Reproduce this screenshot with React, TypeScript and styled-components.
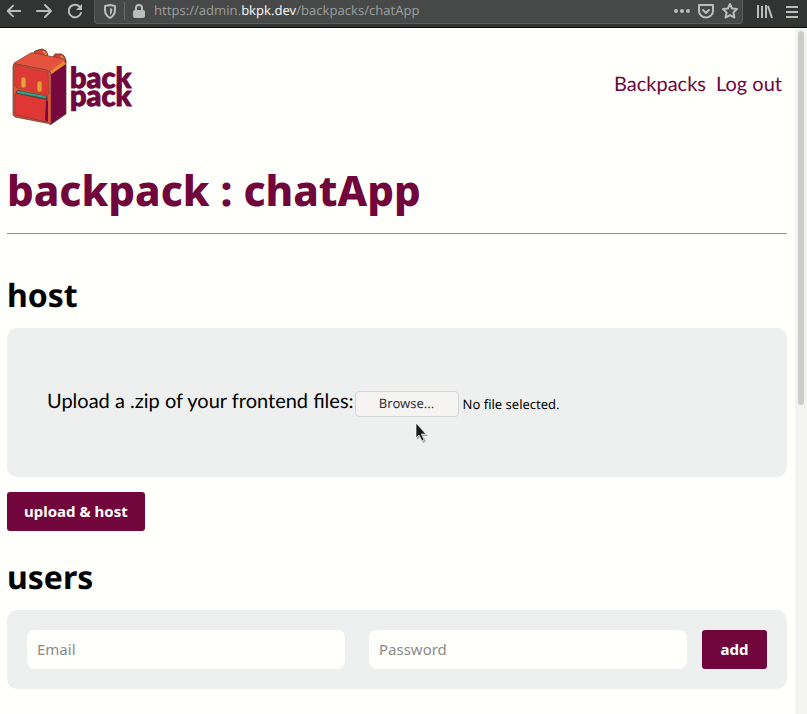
import React, { useState } from "react";
import styled, { createGlobalStyle } from "styled-components";

const plum = "#70063c";
const paper = "#fffffc";
const ui = `"Noto Sans", "Open Sans", sans-serif`;

const GlobalStyle = createGlobalStyle`
  * { box-sizing: border-box; }
  html, body, #root { height: 100%; }
  body { margin: 0; background: ${paper}; color: #000; font-family: ${ui}; overflow: hidden; text-rendering: geometricPrecision; }
  button, input { font-family: inherit; }
`;

const Browser = styled.div`
  display: flex;
  flex-direction: column;
  height: 100vh;
`;

const Toolbar = styled.div`
  display: flex;
  flex: none;
  height: 28px;
  padding: 0 2px 3px 5px;
  background: #323434;
  border-bottom: 1px solid #0c0c0c;
  color: #bcbdbb;
`;

const IconButton = styled.button<{ $width?: number }>`
  display: flex;
  align-items: center;
  justify-content: center;
  width: ${(p) => p.$width ?? 30}px;
  height: 22px;
  padding: 0;
  border: 0;
  background: none;
  color: inherit;
  flex: none;
`;

const AddressBar = styled.div`
  display: flex;
  flex: 1;
  min-width: 0;
  margin: 0 7px 0 9px;
  background: #474949;
  border: 1px solid #5b5d5d;
  border-top: 0;
  border-radius: 0 0 4px 4px;
`;

const Divider = styled.span`
  width: 1px;
  height: 18px;
  margin: 2px 0;
  background: #686a6a;
`;

const Address = styled.div`
  flex: 1;
  min-width: 0;
  overflow: hidden;
  padding-left: 1px;
  color: #999b9a;
  font-size: 13px;
  line-height: 21px;
  white-space: nowrap;
  strong { color: #f4f4f4; font-weight: 400; }
`;

const Viewport = styled.div`
  display: grid;
  grid-template-columns: minmax(0, 1fr) 12px;
  flex: 1;
  min-height: 0;
`;

const Page = styled.div`
  padding: 0 8px 0 7px;
  overflow: hidden;
`;

const ScrollTrack = styled.div`
  padding: 3px;
  background: #f3f4f1;
`;

const ScrollThumb = styled.div`
  height: 55%;
  border-radius: 3px;
  background: #cbcccb;
`;

const Header = styled.header`
  display: flex;
  align-items: center;
  justify-content: space-between;
  height: 112px;
  padding: 6px 5px 0 4px;
`;

const Nav = styled.nav`
  display: flex;
  gap: 10px;
  padding-bottom: 6px;
`;

const NavLink = styled.a`
  color: ${plum};
  font: 20px/24px Lato, sans-serif;
  text-decoration: none;
`;

const Title = styled.h1`
  margin: 0;
  padding: 19px 0 11px;
  border-bottom: 1px solid #8b8c8f;
  color: ${plum};
  font-size: 42px;
  font-weight: 800;
  line-height: 63px;
  white-space: nowrap;
`;

const Section = styled.section<{ $first?: boolean }>`
  padding-top: ${(p) => (p.$first ? 38 : 23)}px;
`;

const SectionTitle = styled.h2`
  margin: 0 0 8px;
  font-size: 32px;
  font-weight: 700;
  line-height: 48px;
`;

const Panel = styled.div<{ $roomy?: boolean }>`
  padding: ${(p) => (p.$roomy ? "60px 40px" : "20px")};
  border-radius: 10px;
  background: #eef0f0;
`;

const FileField = styled.div`
  position: relative;
  display: flex;
  align-items: center;
  min-height: 29px;
`;

const FieldLabel = styled.label`
  padding-bottom: 4px;
  font: 20px/24px Lato, sans-serif;
`;

const HiddenInput = styled.input`
  position: absolute;
  width: 1px;
  height: 1px;
  opacity: 0;
`;

const Browse = styled.label`
  width: 104px;
  height: 26px;
  margin: 3px 4px 0 1px;
  border: 1px solid #d5d7d6;
  border-radius: 4px;
  background: #f5f4f2;
  color: #303334;
  font-size: 13px;
  line-height: 23px;
  text-align: center;
`;

const FileName = styled.span`
  margin-top: 2px;
  font-size: 13px;
  line-height: 20px;
`;

const Pointer = styled.svg`
  position: absolute;
  left: 367px;
  top: 34px;
  pointer-events: none;
`;

const Button = styled.button<{ $spaced?: boolean }>`
  height: 39px;
  margin-top: ${(p) => (p.$spaced ? 15 : 0)}px;
  padding: 0 17px 2px;
  border: 0;
  border-radius: 3px;
  background: ${plum};
  color: ${paper};
  font-size: 15px;
  font-weight: 700;
`;

const UserForm = styled.form`
  display: grid;
  grid-template-columns: 1fr 65px;
  column-gap: 15px;
`;

const Credentials = styled.div`
  display: grid;
  grid-template-columns: 1fr 1fr;
  column-gap: 24px;
`;

const TextInput = styled.input`
  min-width: 0;
  width: 100%;
  height: 39px;
  padding: 0 10px 2px;
  border: 0;
  border-radius: 8px;
  background: ${paper};
  font-size: 15px;
  &::placeholder { color: #8b8b8a; opacity: 1; }
`;

const Stroke = ({ children, width = 2 }: { children: React.ReactNode; width?: number }) => (
  <svg width="20" height="20" viewBox="0 0 20 20" fill="none" stroke="currentColor"
    strokeWidth={width} strokeLinecap="round" strokeLinejoin="round" aria-hidden="true">
    {children}
  </svg>
);

const Logo = () => (
  <svg width="128" height="80" viewBox="0 0 128 80" role="img" aria-label="back pack">
    <path d="M22 7 24 4 31 2Q36 3 37 8L34 11M42 10 44 7 50 7Q54 8 55 14" fill="#dc3f32" stroke="#6b4038" />
    <path d="M32 4 35 7 34 10M50 9 53 13" fill="none" stroke="#e98b33" strokeWidth="2" />
    <path d="M3 16 18 7Q20 5 23 6L53 12 55 15 40 25 5 20Z" fill="#e5533e" stroke="#764239" strokeWidth=".7" />
    <path d="M39 24 55 14V67L39 78Z" fill="#76083f" stroke="#4e3138" strokeWidth=".7" />
    <path d="M39 24 53 14 55 17 39 28Z" fill="#ee8832" />
    <path d="M2 19Q2 16 5 17L36 23Q40 24 40 28V77L4 70 2 68Z" fill="#e55237" stroke="#654139" strokeWidth=".8" />
    <path d="M4 18 37 25 38 45Q38 50 34 48L6 41Q4 40 3 37Z" fill="#df3935" stroke="#a74332" strokeWidth=".8" />
    <path d="M7 46 36 52V75L4 68V48Q4 45 7 46Z" fill="#df3834" stroke="#793b38" strokeWidth=".8" />
    <path d="M35 53 37 54V75L34 73Z" fill="#76083f" />
    <path d="M7 45 35 51" stroke="#64433c" strokeWidth="4" strokeLinecap="round" />
    <path d="M7 45 34 50" stroke="#22aa91" strokeWidth="2" strokeLinecap="round" />
    <rect x="10" y="30" width="5" height="11" rx="2" fill="#ee9b39" stroke="#a75934" strokeWidth=".7" />
    <rect x="26" y="34" width="5" height="11" rx="2" fill="#ee9b39" stroke="#a75934" strokeWidth=".7" />
    <text fill={plum} stroke={plum} strokeWidth="1" fontFamily="Lato, sans-serif" fontSize="29" fontWeight="900">
      <tspan x="59" y="41">back</tspan>
      <tspan x="59" y="59">pack</tspan>
    </text>
  </svg>
);

export default function App() {
  const [file, setFile] = useState("No file selected.");
  return (
    <Browser>
      <GlobalStyle />
      <Toolbar>
        <IconButton aria-label="Back" $width={18}><Stroke><path d="M17 10H3M9 4 3 10 9 16" /></Stroke></IconButton>
        <IconButton aria-label="Forward" $width={42}><Stroke><path d="M3 10H17M11 4 17 10 11 16" /></Stroke></IconButton>
        <IconButton aria-label="Reload" $width={20}><Stroke><path d="M14.5 5.5A6.3 6.3 0 1 0 16 12" /><path d="M17 3V9H11Z" fill="currentColor" strokeWidth="0" /></Stroke></IconButton>
        <AddressBar>
          <IconButton aria-label="Site protection" $width={29}><Stroke><path d="M10 4 15 5V9Q15 14 10 17Q5 14 5 9V5Z" /><path d="M10 7V14Q12.5 12 12.5 8Z" fill="currentColor" strokeWidth="0" /></Stroke></IconButton>
          <Divider />
          <IconButton aria-label="Site security" $width={28}><Stroke><rect x="5" y="10" width="10" height="6" rx="1" fill="currentColor" /><path d="M7 10V7A3 3 0 0 1 13 7V10" /></Stroke></IconButton>
          <Address>https://admin.<strong>bkpk.dev</strong>/backpacks/chatApp</Address>
          <IconButton aria-label="Page actions" $width={24}><Stroke><g fill="currentColor" stroke="none"><circle cx="4" cy="10" r="2" /><circle cx="10" cy="10" r="2" /><circle cx="16" cy="10" r="2" /></g></Stroke></IconButton>
          <IconButton aria-label="Save to Pocket" $width={24}><Stroke><path d="M3 4H17V10A7 6.5 0 0 1 3 10ZM7 9 10 12 13 9" /></Stroke></IconButton>
          <IconButton aria-label="Bookmark" $width={24}><Stroke><path d="M10 3 12.1 7.5 17 8.1 13.4 11.5 14.4 16.5 10 14.1 5.6 16.5 6.6 11.5 3 8.1 7.9 7.5Z" /></Stroke></IconButton>
        </AddressBar>
        <IconButton aria-label="Library" $width={29}><Stroke><path d="M3 4V17M7 5V17M11 4V17M13 5 17 17" strokeLinecap="butt" /></Stroke></IconButton>
        <IconButton aria-label="Menu" $width={26}><Stroke><path d="M4 6H16M4 11H16M4 16H16" strokeLinecap="butt" /></Stroke></IconButton>
      </Toolbar>
      <Viewport>
        <Page>
          <Header>
            <Logo />
            <Nav><NavLink href="#backpacks">Backpacks</NavLink><NavLink href="#logout">Log out</NavLink></Nav>
          </Header>
          <main>
            <Title>backpack : chatApp</Title>
            <Section $first>
              <SectionTitle>host</SectionTitle>
              <Panel $roomy>
                <FileField>
                  <FieldLabel htmlFor="bundle">Upload a .zip of your frontend files:</FieldLabel>
                  <HiddenInput id="bundle" type="file" accept=".zip" onChange={(e) => setFile(e.target.files?.[0]?.name ?? "No file selected.")} />
                  <Browse htmlFor="bundle">Browse...</Browse>
                  <FileName>{file}</FileName>
                  <Pointer width="16" height="22" viewBox="0 0 16 22" aria-hidden="true">
                    <path d="M3 3V18L6 15 9 21 12 19 9 14H14Z" fill="#a9acac" />
                    <path d="M2 1V16L5 13 8 19 10 18 7.5 12H12Z" fill="#171a19" stroke="#fff" strokeWidth=".7" />
                  </Pointer>
                </FileField>
              </Panel>
              <Button type="button" $spaced>upload &amp; host</Button>
            </Section>
            <Section>
              <SectionTitle>users</SectionTitle>
              <Panel>
                <UserForm onSubmit={(e) => e.preventDefault()}>
                  <Credentials>
                    <TextInput type="email" aria-label="Email" placeholder="Email" />
                    <TextInput type="password" aria-label="Password" placeholder="Password" />
                  </Credentials>
                  <Button type="submit">add</Button>
                </UserForm>
              </Panel>
            </Section>
          </main>
        </Page>
        <ScrollTrack aria-hidden="true"><ScrollThumb /></ScrollTrack>
      </Viewport>
    </Browser>
  );
}
